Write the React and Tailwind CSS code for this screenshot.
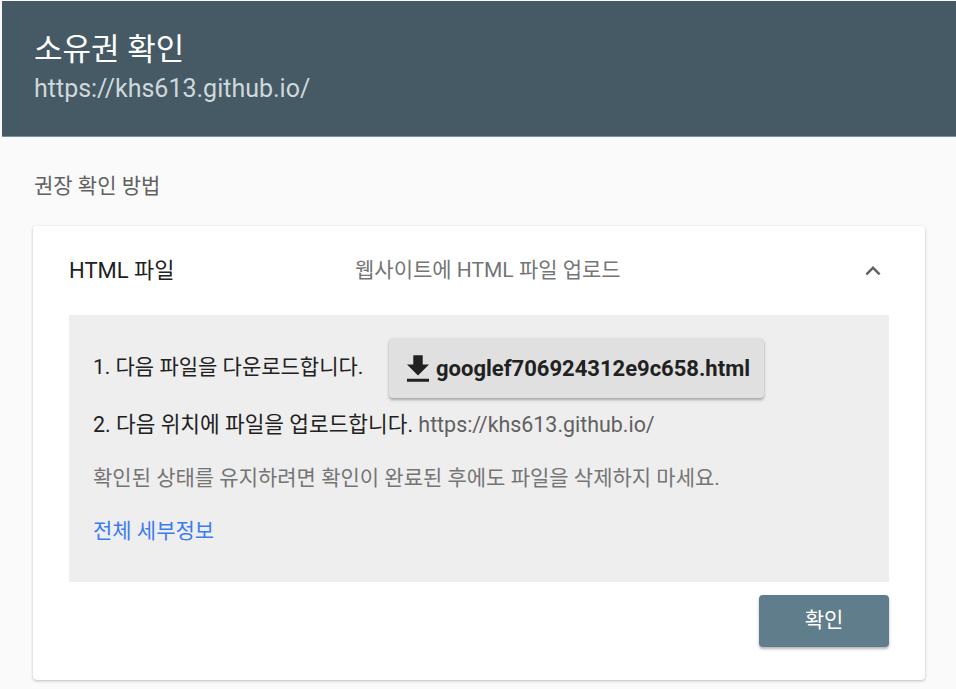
function DownloadIcon() {
    return (
        <svg width="22" height="27" viewBox="5 3 14 17" className="shrink-0">
            <path d="M19 9h-4V3H9v6H5l7 7 7-7zM5 18v2h14v-2H5z" fill="#212121" />
        </svg>
    );
}

function ExpandLess() {
    return (
        <svg width="30" height="30" viewBox="0 0 24 24" className="shrink-0">
            <path d="M12 8l-6 6 1.41 1.41L12 10.83l4.59 4.58L18 14z" fill="#616161" />
        </svg>
    );
}

export default function App() {
    return (
        <div className="w-[956px] h-[689px] bg-[#fafafa] overflow-hidden font-['Roboto','Noto_Sans_CJK_KR',sans-serif]">
            <header className="ml-[2px] mt-[1px] h-[136px] bg-[#455a64] border-b border-[#78909c] px-[32px] pt-[31px]">
                <h1 className="text-[31px] leading-[36px] text-white">소유권 확인</h1>
                <p className="mt-[6px] text-[25px] leading-[30px] text-[#cfd8dc]">https://khs613.github.io/</p>
            </header>

            <div className="px-[33px] pt-[35px]">
                <p className="pl-[1px] text-[21px] leading-[28px] text-[#616161]">권장 확인 방법</p>

                <div className="mt-[26px] w-[892px] bg-white rounded-[4px] shadow-[0_1px_3px_rgba(0,0,0,0.25)]">
                    <div className="flex items-center h-[89px] px-[36px]">
                        <span className="w-[286px] text-[22px] text-[#212121]">HTML 파일</span>
                        <span className="flex-1 text-[21px] text-[#757575]">웹사이트에 HTML 파일 업로드</span>
                        <ExpandLess />
                        <span className="w-[1px]" />
                    </div>

                    <div className="mx-[36px] bg-[#eeeeee] px-[24px] pt-[23px] pb-[37px]">
                        <div className="flex items-center">
                            <span className="w-[296px] shrink-0 text-[21px] text-[#212121]">1. 다음 파일을 다운로드합니다.</span>
                            <button className="flex items-center gap-[7px] h-[60px] pl-[18px] pr-[14px] rounded-[4px] bg-[#e0e0e0] shadow-[0_2px_3px_rgba(0,0,0,0.3)] text-[22px] font-bold text-[#212121]">
                                <DownloadIcon />
                                googlef706924312e9c658.html
                            </button>
                        </div>
                        <p className="mt-[13px] text-[21.4px] leading-[28px] text-[#212121]">
                            2. 다음 위치에 파일을 업로드합니다. <span className="text-[#616161]">https://khs613.github.io/</span>
                        </p>
                        <p className="mt-[25px] text-[21px] leading-[28px] text-[#757575]">
                            확인된 상태를 유지하려면 확인이 완료된 후에도 파일을 삭제하지 마세요.
                        </p>
                        <p className="mt-[25px] text-[21px] leading-[28px] text-[#3b7cf0]">전체 세부정보</p>
                    </div>

                    <div className="flex justify-end px-[36px] pt-[13px] pb-[33px]">
                        <button className="w-[130px] h-[52px] rounded-[4px] bg-[#607d8b] text-white text-[21px] shadow-[0_2px_3px_rgba(0,0,0,0.3)]">
                            확인
                        </button>
                    </div>
                </div>
            </div>
        </div>
    );
}
